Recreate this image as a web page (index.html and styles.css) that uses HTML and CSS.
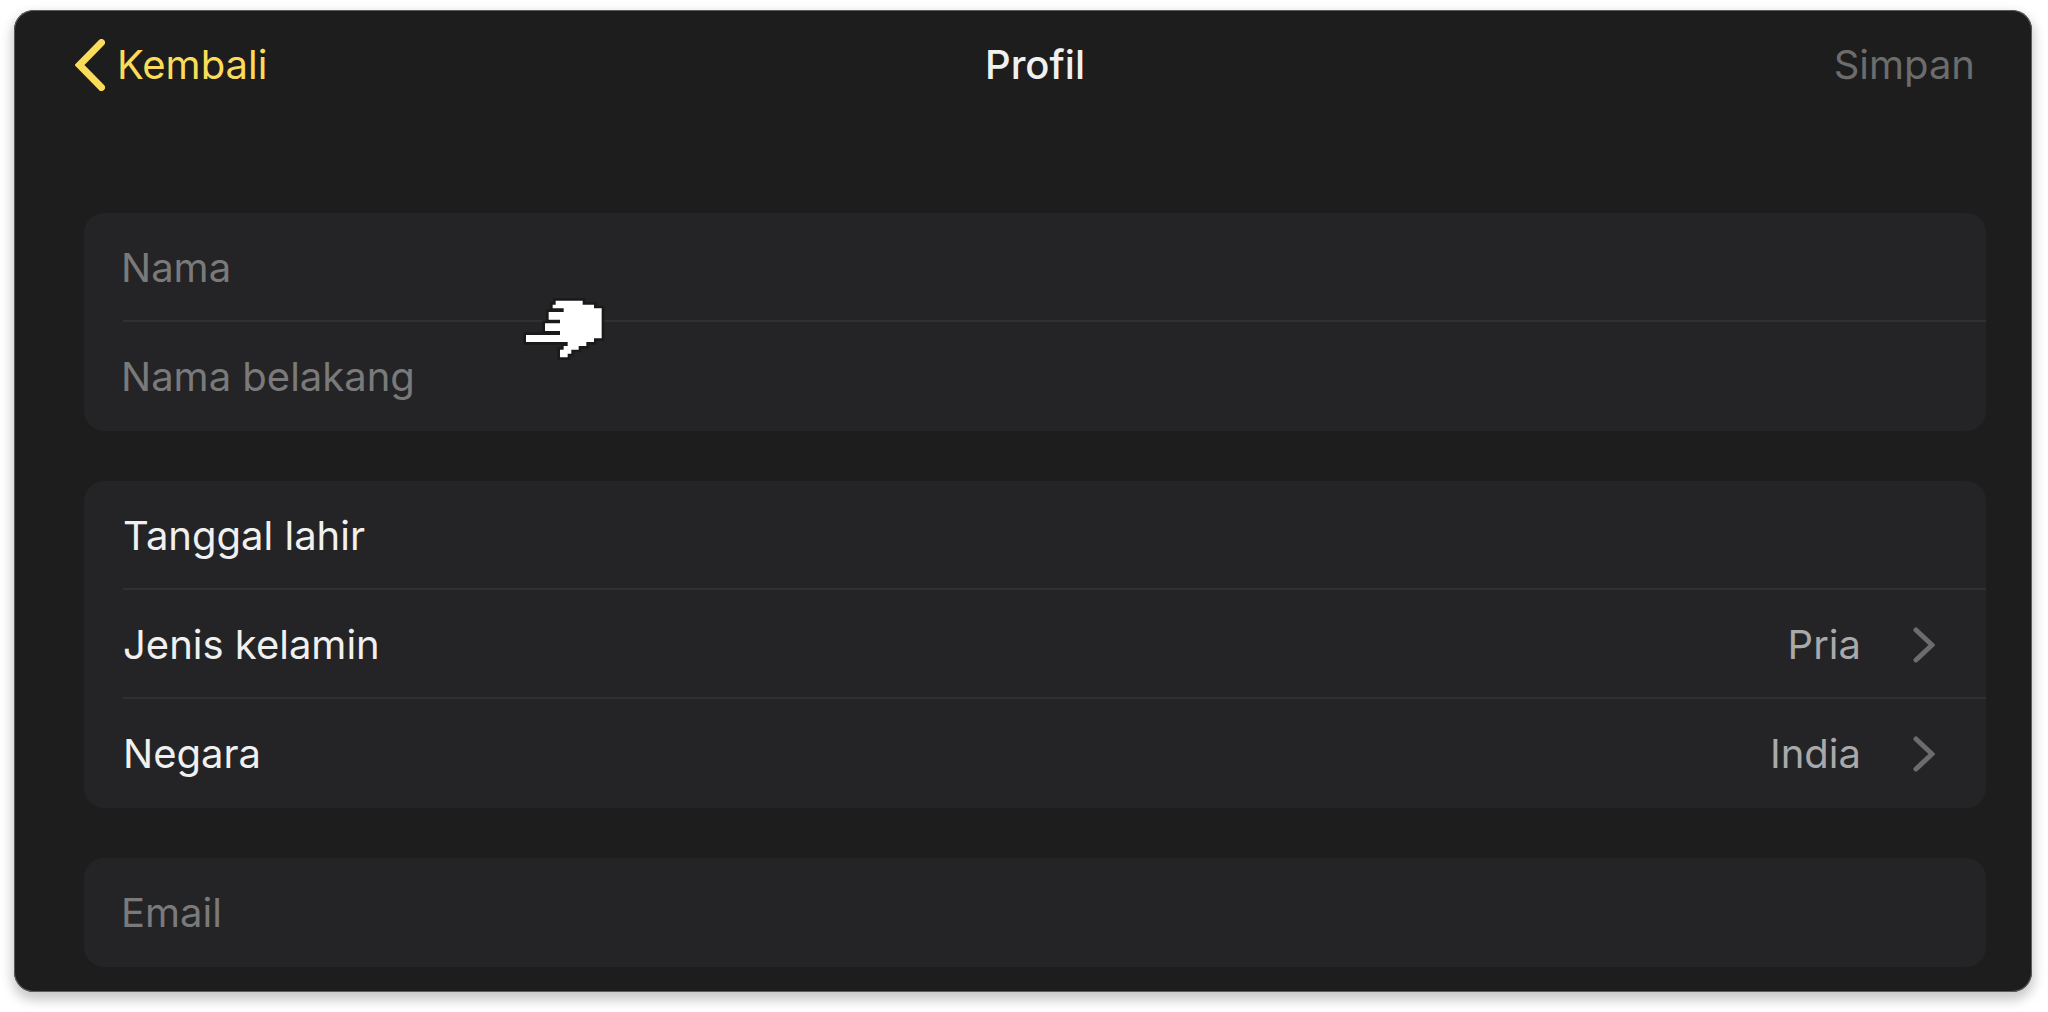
FILE: index.html
```
<!DOCTYPE html>
<html lang="id">

<head>
    <meta charset="UTF-8">
    <title>Profil</title>
    <link rel="stylesheet" href="styles.css">
</head>

<body>
    <form class="panel">
        <header class="header">
            <a class="back" href="#">
                <svg class="back-icon" viewBox="0 0 30 52" aria-hidden="true">
                    <path d="M26.5 3.5L4.5 26L26.5 48.5" />
                </svg>
                Kembali
            </a>
            <h1 class="title">Profil</h1>
            <button class="save" type="submit" disabled>Simpan</button>
        </header>

        <main class="content">
            <div class="group">
                <input class="row field" type="text" aria-label="Nama" placeholder="Nama">
                <hr class="line">
                <input class="row field" type="text" aria-label="Nama belakang" placeholder="Nama belakang">
                <svg class="pointer" viewBox="0 0 330 270" aria-hidden="true">
                    <path d="M137 47H218V59H252V70H275V160H252V171H229V183H206V194H184V206H173V217H150V194H161V183H173V171H48V150H150V138H105V115H150V104H116V81H161V70H128V59H137Z" />
                </svg>
            </div>

            <div class="group">
                <button class="row item" type="button">
                    <span class="label">Tanggal lahir</span>
                </button>
                <hr class="line">
                <button class="row item" type="button">
                    <span class="label">Jenis kelamin</span>
                    <span class="value">Pria</span>
                    <svg class="arrow" viewBox="0 0 22 36" aria-hidden="true">
                        <path d="M3 3L19 18L3 33" />
                    </svg>
                </button>
                <hr class="line">
                <button class="row item" type="button">
                    <span class="label">Negara</span>
                    <span class="value">India</span>
                    <svg class="arrow" viewBox="0 0 22 36" aria-hidden="true">
                        <path d="M3 3L19 18L3 33" />
                    </svg>
                </button>
            </div>

            <div class="group">
                <input class="row field" type="email" aria-label="Email" placeholder="Email">
            </div>
        </main>
    </form>
</body>

</html>
```
FILE: styles.css
```
* {
    margin: 0;
    padding: 0;
    box-sizing: border-box;
}

body {
    padding: 10px 16px 20px 14px;
    background: #fff;
    font-family: Inter, "Liberation Sans", sans-serif;
    font-size: 40px;
    line-height: 48px;
}

button,
input {
    border: 0;
    background: none;
    font: inherit;
    color: inherit;
}

.panel {
    padding-bottom: 25px;
    border-radius: 20px;
    background: #1d1d1e;
    box-shadow: inset 0 0 0 1px #5c5c5d, 0 6px 12px 2px rgba(0, 0, 0, 0.22);
}

.header {
    display: grid;
    grid-template-columns: 1fr auto 1fr;
    align-items: center;
    height: 110px;
    padding: 0 37px 0 61px;
}

.back {
    display: flex;
    align-items: center;
    justify-self: start;
    gap: 12px;
    color: #fadc5a;
    text-decoration: none;
}

.back-icon {
    width: 30px;
    height: 52px;
    fill: none;
    stroke: #fadc5a;
    stroke-width: 7;
    stroke-linecap: round;
}

.title {
    font-size: 40px;
    font-weight: 500;
    color: #f0f0f0;
}

.save {
    justify-self: end;
    padding-right: 20px;
    color: #6c6c6d;
}

.content {
    display: flex;
    flex-direction: column;
    gap: 50px;
    padding: 93px 46px 0 70px;
}

.group {
    position: relative;
    border-radius: 20px;
    background: #242426;
}

.row {
    display: flex;
    align-items: center;
    width: 100%;
    height: 109px;
    text-align: left;
}

.field {
    padding: 0 37px;
    outline: 0;
    color: #f0f0f0;
}

.field::placeholder {
    color: #7a7a7b;
    opacity: 1;
}

.item {
    padding: 0 51px 0 39px;
    color: #f0f0f0;
}

.label {
    flex: 1;
}

.value {
    margin-right: 52px;
    color: #a9a9aa;
}

.arrow {
    width: 22px;
    height: 36px;
    fill: none;
    stroke: #6c6c6d;
    stroke-width: 5;
    stroke-linecap: round;
}

.line {
    height: 2px;
    margin: -2px 0 0 39px;
    border: 0;
    background: #303032;
}

/* hand cursor over the name fields */
.pointer {
    position: absolute;
    top: 72px;
    left: 426px;
    width: 110px;
    height: 90px;
    fill: #fff;
    stroke: #1a1a1b;
    stroke-width: 16;
    paint-order: stroke;
    pointer-events: none;
}
```
